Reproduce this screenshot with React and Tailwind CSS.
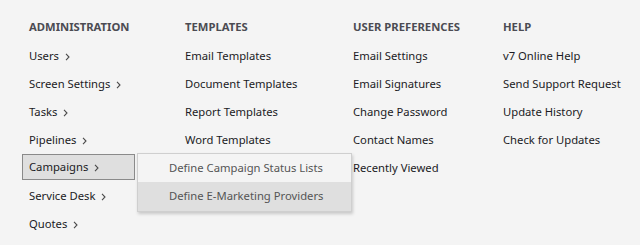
import React from 'react';

const columns = [
  {
    title: 'Administration',
    width: 'w-[156px]',
    items: ['Users', 'Screen Settings', 'Tasks', 'Pipelines', 'Campaigns', 'Service Desk', 'Quotes'],
    arrows: true,
  },
  {
    title: 'Templates',
    width: 'w-[168px]',
    items: ['Email Templates', 'Document Templates', 'Report Templates', 'Word Templates'],
  },
  {
    title: 'User Preferences',
    width: 'w-[150px]',
    items: ['Email Settings', 'Email Signatures', 'Change Password', 'Contact Names', 'Recently Viewed'],
  },
  {
    title: 'Help',
    width: 'w-[130px]',
    items: ['v7 Online Help', 'Send Support Request', 'Update History', 'Check for Updates'],
  },
];

const Chevron = () => (
  <svg width="5" height="8" viewBox="0 0 5 8" className="ml-[6px] mt-px">
    <path d="M1 0.8 L4 4 L1 7.2" fill="none" stroke="#4a4a4a" strokeWidth="1.1" />
  </svg>
);

const SubMenu = () => (
  <div className="absolute left-[108px] top-[-1px] z-10 w-[215px] border border-[#cfcfcf] bg-[#f4f4f4] shadow-[1px_2px_3px_rgba(0,0,0,0.18)] text-[#555]">
    <div className="h-[28px] pl-[31px] flex items-center">Define Campaign Status Lists</div>
    <div className="h-[29px] pl-[31px] flex items-center bg-[#dfdfdf]">Define E-Marketing Providers</div>
  </div>
);

export default function App() {
  return (
    <div
      className="w-[640px] h-[245px] bg-[#f4f4f4] overflow-hidden pl-[29px] pt-[13px] flex text-[11.25px] text-[#1b1b24]"
      style={{ fontFamily: '"Noto Sans", "Open Sans", sans-serif' }}
    >
      {columns.map((col) => (
        <div key={col.title} className={`${col.width} shrink-0 flex flex-col`}>
          <div className="h-[29px] flex items-center font-bold uppercase text-[#4b4b52]">{col.title}</div>
          {col.items.map((item) =>
            item === 'Campaigns' ? (
              <div key={item} className="relative h-[28px]">
                <div className="-ml-[7px] w-[113px] h-[26px] pl-[6px] flex items-center border border-[#8a8a8a] bg-[#dfdfdf]">
                  {item}
                  <Chevron />
                </div>
                <SubMenu />
              </div>
            ) : (
              <div key={item} className="h-[28px] flex items-center">
                {item}
                {col.arrows && <Chevron />}
              </div>
            )
          )}
        </div>
      ))}
    </div>
  );
}
